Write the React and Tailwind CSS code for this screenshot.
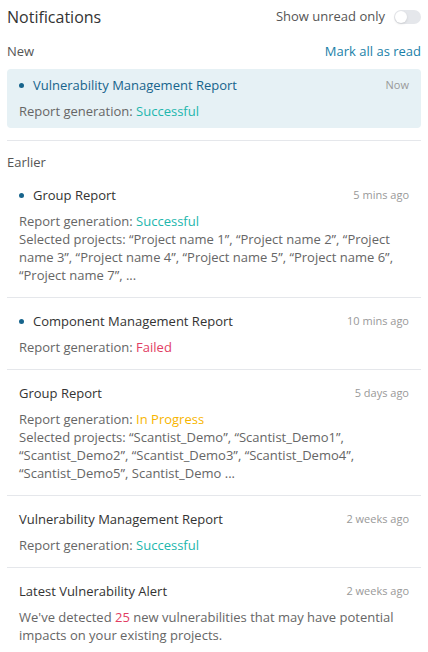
export default function App() {
  const font = { fontFamily: '"Open Sans", "Noto Sans", sans-serif' };
  return (
    <div className="w-[428px] min-h-[652px] bg-white px-[7px] text-[13px] text-[#666]" style={font}>
      {/* header */}
      <div className="flex h-[32px] items-center justify-between pt-[1px]">
        <h1 className="text-[16px] font-medium text-[#333]">Notifications</h1>
        <div className="flex items-center gap-[9px]">
          <span className="text-[13px] text-[#555]">Show unread only</span>
          <button className="relative h-[14px] w-[27px] rounded-full bg-[#e5e7eb]">
            <span className="absolute left-[1px] top-[1px] h-[12px] w-[12px] rounded-full bg-white shadow-sm" />
          </button>
        </div>
      </div>

      {/* New */}
      <div className="border-b border-[#e5e7eb] pb-[12px]">
        <div className="mt-[10px] flex items-center justify-between leading-[18px]">
          <span className="text-[#555]">New</span>
          <button className="text-[#1a7fa8]">Mark all as read</button>
        </div>
        <div className="mt-[9px] rounded-[4px] bg-[#e6f1f5] px-[12px] pb-[8px] pt-[7px]">
          <div className="flex items-center justify-between leading-[18px]">
            <div className="flex items-center gap-[9px]">
              <span className="h-[5px] w-[5px] rounded-full bg-[#17648c]" />
              <span className="font-medium text-[#17648c]">Vulnerability Management Report</span>
            </div>
            <span className="text-[11px] text-[#999]">Now</span>
          </div>
          <p className="mt-[8px] leading-[18px]">
            Report generation: <span className="font-medium text-[#22b6ad]">Successful</span>
          </p>
        </div>
      </div>

      {/* Earlier */}
      <div className="pt-[12px] leading-[18px] text-[#555]">Earlier</div>
      <div className="mt-[1px]">
        <Item
          unread
          title="Group Report"
          time="5 mins ago"
          status="Successful"
          statusClass="text-[#22b6ad]"
          extra="Selected projects: “Project name 1”, “Project name 2”, “Project name 3”, “Project name 4”, “Project name 5”, “Project name 6”, “Project name 7”, ..."
        />
        <Item
          unread
          title="Component Management Report"
          time="10 mins ago"
          status="Failed"
          statusClass="text-[#e23d63]"
        />
        <Item
          title="Group Report"
          time="5 days ago"
          status="In Progress"
          statusClass="text-[#f7b500]"
          extra="Selected projects: “Scantist_Demo”, “Scantist_Demo1”, “Scantist_Demo2”, “Scantist_Demo3”, “Scantist_Demo4”, “Scantist_Demo5”, Scantist_Demo ..."
        />
        <Item
          title="Vulnerability Management Report"
          time="2 weeks ago"
          status="Successful"
          statusClass="text-[#22b6ad]"
        />
        <div className="px-[12px] pb-[13px] pt-[14px]">
          <div className="flex items-center justify-between leading-[18px]">
            <span className="text-[#333]">Latest Vulnerability Alert</span>
            <span className="text-[11px] text-[#999]">2 weeks ago</span>
          </div>
          <p className="mt-[8px] leading-[18px]">
            We've detected <span className="text-[#e23d63]">25</span> new vulnerabilities that may have
            potential impacts on your existing projects.
          </p>
        </div>
      </div>
    </div>
  );
}

function Item({ unread, title, time, status, statusClass, extra }) {
  return (
    <div className="border-b border-[#e5e7eb] px-[12px] pb-[13px] pt-[14px]">
      <div className="flex items-center justify-between leading-[18px]">
        <div className="flex items-center gap-[9px]">
          {unread && <span className="h-[5px] w-[5px] rounded-full bg-[#17648c]" />}
          <span className={unread ? "font-medium text-[#333]" : "text-[#333]"}>{title}</span>
        </div>
        <span className="text-[11px] text-[#999]">{time}</span>
      </div>
      <p className="mt-[8px] leading-[18px]">
        Report generation: <span className={`font-medium ${statusClass}`}>{status}</span>
      </p>
      {extra && <p className="leading-[18px]">{extra}</p>}
    </div>
  );
}
